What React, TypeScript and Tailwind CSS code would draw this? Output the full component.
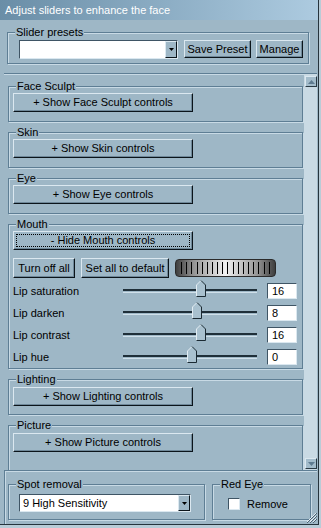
import type { ReactNode } from "react";

const sections = ["Face Sculpt", "Skin", "Eye"];

const sliders = [
  { label: "Lip saturation", value: "16", pos: 73 },
  { label: "Lip darken", value: "8", pos: 69 },
  { label: "Lip contrast", value: "16", pos: 73 },
  { label: "Lip hue", value: "0", pos: 64 },
];

function GroupBox({ label, className, children }: { label: string; className: string; children?: ReactNode }) {
  return (
    <div
      className={`relative border border-[#5e7e94] shadow-[inset_1px_1px_0_#c8dae5,1px_1px_0_#c8dae5] ${className}`}
    >
      <span className="absolute -top-[7px] left-[7px] bg-[#9eb7c6] px-[1px] leading-[13px]">{label}</span>
      {children}
    </div>
  );
}

function Button({ className, children }: { className: string; children: ReactNode }) {
  return (
    <div
      className={`flex items-center justify-center border border-t-[#dbe8f0] border-l-[#dbe8f0] border-r-[#0b141a] border-b-[#0b141a] shadow-[inset_-1px_-1px_0_#6f8899] leading-none ${className}`}
    >
      {children}
    </div>
  );
}

function DropArrow() {
  return (
    <div className="flex h-full w-[12px] items-center justify-center border border-t-[#dbe8f0] border-l-[#dbe8f0] border-r-[#0b141a] border-b-[#0b141a] bg-[#9eb7c6]">
      <svg width="5" height="3" viewBox="0 0 5 3">
        <polygon points="0,0 5,0 2.5,3" fill="#000" />
      </svg>
    </div>
  );
}

function Thumb() {
  return (
    <svg width="10" height="17" viewBox="0 0 10 17">
      <polygon points="0.5,16.5 0.5,5 5,0.5 9.5,5 9.5,16.5" fill="#a9c1cf" />
      <polyline points="0.5,16.5 0.5,5 5,0.5" fill="none" stroke="#e2edf3" />
      <polyline points="5,0.5 9.5,5 9.5,16.5 0.5,16.5" fill="none" stroke="#1b2a33" />
    </svg>
  );
}

function ScrollArrow({ up }: { up: boolean }) {
  return (
    <div className="flex h-[11px] w-[12px] items-center justify-center border border-t-[#dbe8f0] border-l-[#dbe8f0] border-r-[#2a3a44] border-b-[#2a3a44] bg-[#a3bccb]">
      <svg width="7" height="4" viewBox="0 0 7 4">
        <polygon points={up ? "0,4 7,4 3.5,0" : "0,0 7,0 3.5,4"} fill="#5e7b90" />
      </svg>
    </div>
  );
}

export default function App() {
  return (
    <div className="h-[528px] w-[321px] bg-[#b9ccd7] font-['Liberation_Sans',Arial,sans-serif] text-[11px] text-black">
      <div className="relative flex h-[525px] w-[319px] flex-col border-r border-b border-[#26343d] bg-[#9eb7c6]">
        {/* title */}
        <div className="h-[20px] bg-gradient-to-r from-[#6a8ea7] to-[#adcbe0] pl-[5px] leading-[20px] text-white">
          Adjust sliders to enhance the face
        </div>

        {/* presets */}
        <div className="h-[53px] pl-[7px] pt-[12px]">
          <GroupBox label="Slider presets" className="flex h-[32px] w-[302px] pl-[11px] pt-[7px]">
            <div className="flex h-[19px] w-[159px] justify-end border border-t-[#3f5565] border-l-[#3f5565] border-r-[#dbe8f0] border-b-[#dbe8f0] bg-white">
              <DropArrow />
            </div>
            <Button className="ml-[6px] h-[18px] w-[67px]">Save Preset</Button>
            <Button className="ml-[5px] h-[18px] w-[47px]">Manage</Button>
          </GroupBox>
        </div>

        {/* scroll area */}
        <div className="ml-[4px] flex h-[397px] w-[313px] border-t border-[#5e7e94] shadow-[inset_0_1px_0_#c8dae5]">
          <div className="w-[300px] overflow-hidden pl-[4px] pt-[12px]">
            {sections.map((name) => (
              <GroupBox key={name} label={name} className="mb-[10px] h-[36px] w-[295px] pl-[4px] pt-[6px]">
                <Button className="h-[19px] w-[180px]">+ Show {name} controls</Button>
              </GroupBox>
            ))}

            <GroupBox label="Mouth" className="mb-[10px] h-[145px] w-[295px] pl-[4px] pt-[6px]">
              <Button className="relative h-[19px] w-[180px]">
                - Hide Mouth controls
                <span className="absolute inset-[2px] border border-dotted border-black" />
              </Button>
              <div className="mt-[8px] flex items-center">
                <Button className="h-[20px] w-[62px]">Turn off all</Button>
                <Button className="ml-[6px] h-[20px] w-[88px]">Set all to default</Button>
                <div className="ml-[6px] flex h-[18px] w-[101px] items-center justify-around rounded-[4px] border border-[#2a2a2a] bg-[linear-gradient(to_right,#3e3e3e,#959595_18%,#f2f2f2_50%,#959595_82%,#3e3e3e)] px-[3px]">
                  {Array.from({ length: 18 }).map((_, i) => (
                    <span key={i} className="h-[12px] w-[1px] bg-black" />
                  ))}
                </div>
              </div>
              <div className="mt-[2px]">
                {sliders.map((s) => (
                  <div key={s.label} className="flex h-[22px] items-center">
                    <div className="w-[110px]">{s.label}</div>
                    <div className="relative h-[4px] w-[134px] border-t-2 border-b border-t-[#1f2f39] border-b-[#d0e0ea]">
                      <div className="absolute -top-[11px]" style={{ left: s.pos }}>
                        <Thumb />
                      </div>
                    </div>
                    <div className="ml-[10px] h-[16px] w-[30px] border border-t-[#3f5565] border-l-[#3f5565] border-r-[#dbe8f0] border-b-[#dbe8f0] bg-white pl-[4px] leading-[14px]">
                      {s.value}
                    </div>
                  </div>
                ))}
              </div>
            </GroupBox>

            <GroupBox label="Lighting" className="mb-[10px] h-[36px] w-[295px] pl-[4px] pt-[7px]">
              <Button className="h-[19px] w-[180px]">+ Show Lighting controls</Button>
            </GroupBox>
            <GroupBox label="Picture" className="h-[60px] w-[295px] pl-[4px] pt-[7px]">
              <Button className="h-[19px] w-[180px]">+ Show Picture controls</Button>
            </GroupBox>
          </div>

          {/* scrollbar */}
          <div className="flex w-[13px] flex-col justify-between bg-[#c9dae4] pb-[1px] pl-[1px] pt-[2px]">
            <ScrollArrow up />
            <ScrollArrow up={false} />
          </div>
        </div>

        {/* bottom */}
        <div className="ml-[4px] flex h-[54px] w-[313px] border-t border-l border-[#5e7e94] pl-[3px] pt-[13px] shadow-[inset_1px_1px_0_#c8dae5]">
          <GroupBox label="Spot removal" className="h-[36px] w-[197px] pl-[10px] pt-[9px]">
            <div className="flex h-[18px] w-[172px] items-center justify-between border border-t-[#3f5565] border-l-[#3f5565] border-r-[#dbe8f0] border-b-[#dbe8f0] bg-white pl-[3px]">
              <span>9 High Sensitivity</span>
              <DropArrow />
            </div>
          </GroupBox>
          <GroupBox label="Red Eye" className="ml-[7px] flex h-[36px] w-[99px] items-start pl-[15px] pt-[13px]">
            <div className="h-[12px] w-[12px] border border-t-[#3f5565] border-l-[#3f5565] border-r-[#dbe8f0] border-b-[#dbe8f0] bg-white" />
            <span className="ml-[7px] leading-[12px]">Remove</span>
          </GroupBox>
        </div>

        {/* resize grip */}
        <svg className="absolute bottom-[1px] right-[1px]" width="11" height="11" viewBox="0 0 11 11">
          <path d="M10 1 L1 10 M10 4 L4 10 M10 7 L7 10" stroke="#e4eef4" strokeWidth="1" />
          <path d="M11 1 L1 11 M11 4 L4 11 M11 7 L7 11" stroke="#4b6272" strokeWidth="1" />
        </svg>
      </div>
    </div>
  );
}
